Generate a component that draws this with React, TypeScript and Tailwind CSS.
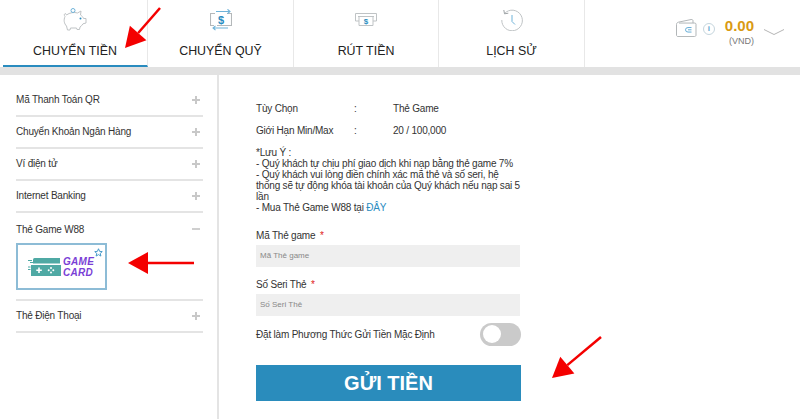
import type { ReactNode } from 'react';

const Piggy = () => (
  <svg width="26" height="23" viewBox="0 0 26 23" fill="none" strokeWidth="1">
    <path d="M3 8.500C2 7 2 6 3.500 5.500l1 1.500c3-2.500 8-3 11-2l3.500-2-.500 4c1.500 1 2.500 2 3 3.500h2.500v4.500l-3 .8c-.8 1.500-2 2.500-3 3.200l-.5 2.500H15l-.5-1.500H8.500L8 22H5.500l-1-4C2 15.500 1.500 12 3 8.500z" stroke="#bfc3c5" />
    <circle cx="11" cy="2.500" r="2" stroke="#6fb3d9" />
    <circle cx="18.500" cy="10.500" r="1" fill="#2a8cbf" />
  </svg>
);

const Transfer = () => (
  <svg width="22" height="22" viewBox="0 0 22 22" fill="none" strokeWidth="1.100">
    <path d="M5 4.500H.5v12H4M17 4.500h4.500v12H7" stroke="#b4b8ba" />
    <path d="M6 2.500h14M17.500 .3 20 2.500l-2.500 2.200M18 19H3M5.500 16.800 3 19l2.500 2.200" stroke="#6fb3d9" />
    <text x="11" y="14.500" textAnchor="middle" fontSize="11" fontWeight="700" fill="#2a8cbf" fontFamily="Liberation Sans, sans-serif">$</text>
  </svg>
);

const Withdraw = () => (
  <svg width="22" height="13" viewBox="0 0 22 13" fill="none" strokeWidth="1">
    <path d="M.5 8V.5h21V8H18M.5 8H4" stroke="#bfc3c5" />
    <path d="M3 3.500h16" stroke="#bfc3c5" />
    <path d="M4 3.500v9h14v-9" stroke="#bfc3c5" />
    <text x="11" y="11" textAnchor="middle" fontSize="8" fontWeight="700" fill="#2a8cbf" fontFamily="Liberation Sans, sans-serif">$</text>
  </svg>
);

const History = () => (
  <svg width="22" height="22" viewBox="0 0 22 22" fill="none" strokeWidth="1">
    <path d="M3.500 4.500A10.300 10.300 0 1 1 .8 11" stroke="#bfc3c5" />
    <path d="M2.800 1l.7 3.800 3.800-.6" stroke="#9ea3a6" />
    <path d="M11 6v6.500l3 3" stroke="#6fb3d9" />
  </svg>
);

const Wallet = () => (
  <svg className="mt-[1px]" width="21" height="18" viewBox="0 0 21 20" preserveAspectRatio="none" fill="none" strokeWidth="1">
    <path d="M.5 6c0-1.500.7-2 2-2.500L15 .6c1.300-.3 2 .4 2 1.500V4.500" stroke="#aeb2b4" />
    <path d="M.5 6v12c0 .8.700 1.500 1.500 1.500h16.500c.8 0 1.500-.7 1.500-1.500V5.800c0-.8-.5-1.300-1.300-1.300H3" stroke="#aeb2b4" />
    <path d="M15.500 9.500h-3.500a2.500 2.500 0 0 0 0 5h3.500M12 12h3.500" stroke="#5fa9d4" />
  </svg>
);

const tabs: { label: string; icon: ReactNode; active?: boolean; width: string }[] = [
  { label: 'CHUYỂN TIỀN', icon: <Piggy />, active: true, width: 'w-[145px]' },
  { label: 'CHUYỂN QUỸ', icon: <Transfer />, width: 'w-[146px]' },
  { label: 'RÚT TIỀN', icon: <Withdraw />, width: 'w-[145px]' },
  { label: 'LỊCH SỬ', icon: <History />, width: 'w-[146px]' },
];

const Arrow = ({ x1, y1, x2, y2 }: { x1: number; y1: number; x2: number; y2: number }) => {
  // shaft plus a solid head pointing at x2,y2
  const angle = Math.atan2(y2 - y1, x2 - x1);
  const len = 20;
  const wing = 11;
  const bx = x2 - Math.cos(angle) * len;
  const by = y2 - Math.sin(angle) * len;
  const px = -Math.sin(angle) * wing;
  const py = Math.cos(angle) * wing;
  return (
    <svg className="absolute top-0 left-0" width="800" height="419" viewBox="0 0 800 419">
      <line x1={x1} y1={y1} x2={bx} y2={by} stroke="#f40000" strokeWidth="2.500" />
      <polygon points={`${x2},${y2} ${bx + px},${by + py} ${bx - px},${by - py}`} fill="#f40000" />
    </svg>
  );
};

const MenuRow = ({ label, open }: { label: string; open?: boolean }) => (
  <div className={`flex items-center justify-between h-[32px] pr-[3px] ${open ? '' : 'border-b-2 border-[#e4e4e4] pb-[1px]'}`}>
    <span>{label}</span>
    {open ? (
      <span className="w-[8px] h-[2px] bg-[#cfcfcf]" />
    ) : (
      <svg width="8" height="8" viewBox="0 0 8 8" fill="#c8c8c8">
        <path d="M3 0h2v3h3v2H5v3H3V5H0V3h3z" />
      </svg>
    )}
  </div>
);

export default function App() {
  return (
    <div className="relative w-[800px] h-[419px] overflow-hidden bg-white text-[#333] text-[10px] tracking-[-0.2px] font-['Liberation_Sans',sans-serif]">
      <header className="flex h-[75px] border-b-[8px] border-[#e2e2e2] tracking-normal">
        {tabs.map((tab) => (
          <div
            key={tab.label}
            className={`${tab.width} flex flex-col items-center border-r border-[#e8e8e8] ${tab.active ? 'border-b-2 border-b-[#2a8cbf] ml-[3px]' : ''}`}
          >
            <div className="h-[39px] flex items-center justify-center">{tab.icon}</div>
            <span className="text-[12.400px] mt-[3px] text-[#222]">{tab.label}</span>
          </div>
        ))}
        <div className="flex-1 flex items-start justify-end pt-[18px] pr-[16px]">
          <Wallet />
          <span className="ml-[6px] mt-[5px] w-[12px] h-[12px] rounded-full border border-[#c5d5dd] text-[#5aa5d0] text-[8px] leading-[10px] text-center font-bold">i</span>
          <div className="ml-[10px] flex flex-col items-end">
            <span className="text-[#d99a14] text-[15px] font-bold leading-[16px]">0.00</span>
            <span className="text-[#777] text-[9px] leading-[12px] mt-[1px]">(VND)</span>
          </div>
          <svg className="ml-[10px] mt-[11px]" width="20" height="6" viewBox="0 0 20 6" fill="none" stroke="#b5b5b5">
            <path d="M0 .5l10 5 10-5" />
          </svg>
        </div>
      </header>

      <div className="flex h-[344px]">
        <aside className="w-[219px] h-full border-r-2 border-[#e4e4e4] pl-[16px] pr-[14px] pt-[10px]">
          <MenuRow label="Mã Thanh Toán QR" />
          <MenuRow label="Chuyển Khoản Ngân Hàng" />
          <MenuRow label="Ví điện tử" />
          <MenuRow label="Internet Banking" />
          <MenuRow label="Thẻ Game W88" open />
          <div className="relative w-[91px] h-[47px] border-2 border-[#8dbcd6] flex items-center pl-[10px] gap-[2px] -mt-[2px]">
            <svg className="mt-[1px]" width="33" height="18" viewBox="0 0 33 18">
              <path d="M5 1.500a1.500 1.500 0 0 1 1.500-1.500H32v5.500H5z" fill="#4fa9a4" />
              <path d="M3 7h30v11H3z" fill="#4fa9a4" />
              <path d="M0 2.500h4M2 4.500h3M0 9h2.500M0 11.500h2.500" stroke="#4fa9a4" strokeWidth="1" />
              <path d="M11 9.500v5.500M8.300 12.200h5.500" stroke="#fff" strokeWidth="1.600" />
              <circle cx="23" cy="10" r="1" fill="#fff" />
              <circle cx="23" cy="14.500" r="1" fill="#fff" />
              <circle cx="20.700" cy="12.200" r="1" fill="#fff" />
              <circle cx="25.300" cy="12.200" r="1" fill="#fff" />
            </svg>
            <div className="text-[#7a3fd6] italic font-bold text-[10px] tracking-[0.3px] leading-[11.500px] mt-[1px]">
              <div>GAME</div>
              <div>CARD</div>
            </div>
            <svg className="absolute top-[3px] right-[2px]" width="9" height="9" viewBox="0 0 24 24" fill="none" stroke="#3c94c6" strokeWidth="2.500">
              <path d="M12 2l3 7 7 .6-5.300 4.700 1.700 7.200L12 17.700 5.600 21.500l1.700-7.200L2 9.600 9 9z" />
            </svg>
          </div>
          <div className="mt-[9px] border-t-2 border-[#e4e4e4]">
            <MenuRow label="Thẻ Điện Thoại" />
          </div>
        </aside>

        <main className="pl-[37px] pt-[26px] w-[302px]">
          <div className="flex h-[22px]">
            <span className="w-[98px]">Tùy Chọn</span>
            <span className="w-[39px]">:</span>
            <span>Thẻ Game</span>
          </div>
          <div className="flex h-[22px]">
            <span className="w-[98px]">Giới Hạn Min/Max</span>
            <span className="w-[39px]">:</span>
            <span>20 / 100,000</span>
          </div>
          <p className="mt-[2px] leading-[11.100px] w-[265px]">
            *Lưu Ý :<br />
            - Quý khách tự chịu phí giao dịch khi nạp bằng thẻ game 7%<br />
            - Quý khách vui lòng điền chính xác mã thẻ và số seri, hệ thống sẽ tự động khóa tài khoản của Quý khách nếu nạp sai 5 lần<br />
            - Mua Thẻ Game W88 tại <span className="text-[#2a8cbf]">ĐÂY</span>
          </p>

          <label className="block mt-[14px] h-[17px]">
            Mã Thẻ game <span className="text-[#e02020] ml-[2px]">*</span>
          </label>
          <div className="w-[264px] h-[22px] bg-[#efefef] pl-[4px] flex items-center text-[8px] tracking-normal text-[#888]">Mã Thẻ game</div>
          <label className="block mt-[10px] h-[17px]">
            Số Seri Thẻ <span className="text-[#e02020] ml-[2px]">*</span>
          </label>
          <div className="w-[264px] h-[22px] bg-[#efefef] pl-[4px] flex items-center text-[8px] tracking-normal text-[#888]">Số Seri Thẻ</div>
          <div className="flex items-center justify-between w-[265px] h-[23px] mt-[7px]">
            <span>Đặt làm Phương Thức Gửi Tiền Mặc Định</span>
            <div className="w-[41px] h-[23px] rounded-full bg-[#cacaca] flex items-center pl-[3px]">
              <div className="w-[18px] h-[18px] rounded-full bg-white" />
            </div>
          </div>
          <button className="block mt-[19px] w-[265px] h-[36px] bg-[#2a8cbc] text-white text-[20px] tracking-normal font-bold">GỬI TIỀN</button>
        </main>
      </div>

      <Arrow x1={160} y1={8} x2={125} y2={48} />
      <Arrow x1={194} y1={263} x2={128} y2={263} />
      <Arrow x1={601} y1={337} x2={552} y2={378} />
    </div>
  );
}
